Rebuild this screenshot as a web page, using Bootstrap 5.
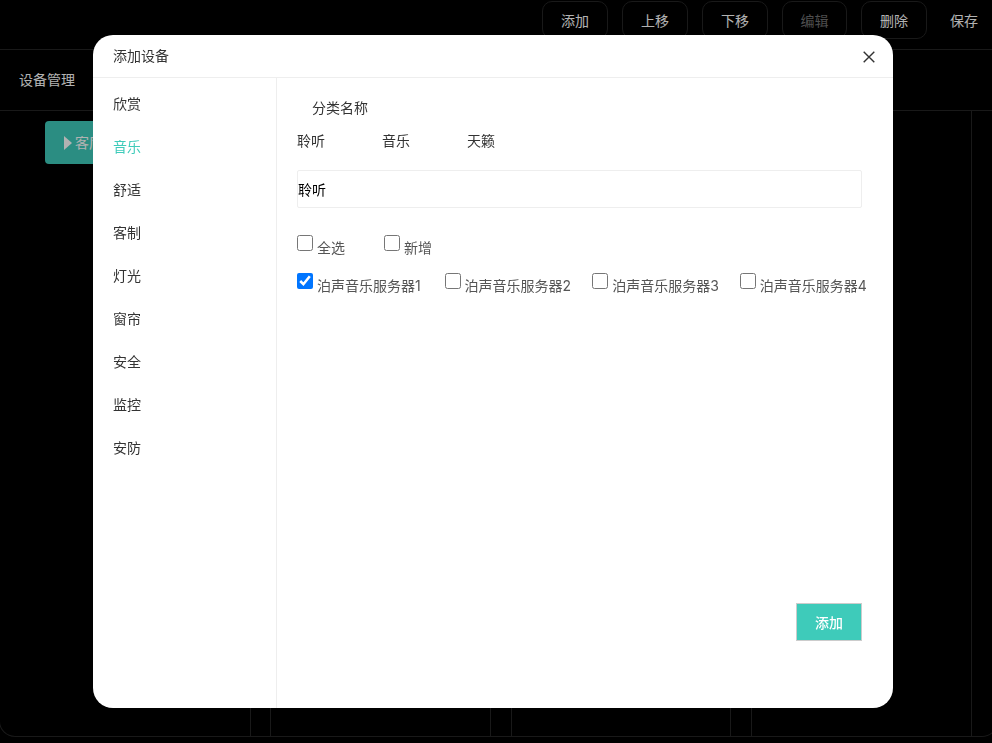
<!DOCTYPE html>
<html lang="zh-CN">
<head>
<meta charset="utf-8">
<title>添加设备</title>
<link href="https://cdn.jsdelivr.net/npm/bootstrap@5.3.0/dist/css/bootstrap.min.css" rel="stylesheet">
<style>
html,body{height:100%;overflow:hidden}
body{background:#000;font-family:"Inter","Noto Sans CJK SC",sans-serif;font-size:14px;color:#333}
.top-bar{height:50px;border-bottom:1px solid #242424;padding-left:542px;gap:14px}
.tool-btn{width:66px;height:38px;margin-top:1px;color:#fff;background:transparent;border:1px solid #242424;border-radius:10px;font-size:14px;padding:0}
.tool-btn.dim{color:#707070;width:65px}
.tool-save{color:#fff;background:transparent;border:0;padding:0;margin:1px 0 0 9px;font-size:14px;height:38px}
.frame{height:687px;margin:0 -6px 0 -1px;border-left:1px solid #242424;border-bottom:1px solid #242424;border-right:1px solid #242424;border-radius:0 0 16px 16px}
.sub-head{height:61px;border-bottom:1px solid #242424;padding-left:19px;color:#fff;line-height:60px}
.col-wrap{height:625px}
.pane{flex:none;width:251px;padding:10px 0 0 45px;border-right:1px solid #242424}
.pane-n{flex:none;width:221px;margin-left:19px;border-left:1px solid #242424;border-right:1px solid #242424}
.pane-n.third{width:220px;margin-left:20px}
.pane-n.fourth{width:221px;margin-left:20px}
.room-btn{width:130px;height:43px;background:#3ecbba;color:#fff;border:0;border-radius:4px;padding:0 0 0 19px;text-align:left;font-size:14px}
.tri{display:inline-block;border-left:8px solid #fff;border-top:7px solid transparent;border-bottom:7px solid transparent;margin-right:3px;vertical-align:-2px}
.modal-backdrop.show{opacity:.3}
.add-dialog{width:800px;max-width:800px;margin:35px 0 0 93px}
.add-content{height:673px;border:0;border-radius:20px;color:#333}
.add-head{height:43px;padding:0 18px 0 20px;border-bottom:1px solid #eee}
.add-title{font-size:14px;font-weight:400;color:#333}
.close-x{background:transparent;border:0;padding:0;width:12px;height:12px;display:flex;margin-top:1px}
.side-menu{width:184px;border-right:1px solid #eee;padding:4px 0 0 20px}
.side-item{height:43px;line-height:43px;color:#333}
.side-item.on{color:#3ecbba}
.add-main{padding:0 0 0 20px}
.cat-name{height:42px;padding:20px 0 0 15px;line-height:20px}
.cat-tabs{margin-top:11px;gap:57px;line-height:20px}
.name-input{width:565px;height:38px;margin-top:19px;padding:0;border:1px solid #eee;border-radius:2px;font-size:14px;color:#000}
.chk-row{margin-top:27px;gap:39px;color:#555}
.chk-row.second{margin-top:15px;gap:0}
.chk-item{display:flex;align-items:flex-start;gap:4px;height:23px;white-space:nowrap;line-height:20px}
.chk-row.second .chk-item{width:147.6px}
.chk-box{width:16px;height:16px;margin:0;flex:none}
.chk-item span{padding-top:3px}
.add-btn{width:66px;height:38px;background:#3ecbba;color:#fff;border:1px solid #ccc;border-radius:0;padding:0;font-size:14px;font-weight:500}
.add-foot{width:565px;margin-top:307px}
</style>
</head>
<body>
<div class="d-flex top-bar">
  <button class="tool-btn">添加</button>
  <button class="tool-btn">上移</button>
  <button class="tool-btn">下移</button>
  <button class="tool-btn dim">编辑</button>
  <button class="tool-btn">删除</button>
  <button class="tool-save">保存</button>
</div>
<div class="frame">
  <div class="sub-head">设备管理</div>
  <div class="d-flex col-wrap">
    <div class="pane"><button class="room-btn"><span class="tri"></span>客厅</button></div>
    <div class="pane-n"></div>
    <div class="pane-n third"></div>
    <div class="pane-n fourth"></div>
  </div>
</div>

<div class="modal-backdrop show"></div>
<div class="modal d-block" tabindex="-1">
  <div class="modal-dialog add-dialog">
    <div class="modal-content add-content">
      <div class="d-flex align-items-center justify-content-between add-head">
        <h5 class="add-title m-0">添加设备</h5>
        <button type="button" class="close-x" aria-label="Close">
          <svg width="12" height="12" viewBox="0 0 12 12" fill="none" stroke="#333" stroke-width="1.4"><path d="M.7.7l10.6 10.6M11.3.7L.7 11.3"/></svg>
        </button>
      </div>
      <div class="d-flex flex-grow-1">
        <div class="side-menu">
          <div class="side-item">欣赏</div>
          <div class="side-item on">音乐</div>
          <div class="side-item">舒适</div>
          <div class="side-item">客制</div>
          <div class="side-item">灯光</div>
          <div class="side-item">窗帘</div>
          <div class="side-item">安全</div>
          <div class="side-item">监控</div>
          <div class="side-item">安防</div>
        </div>
        <div class="add-main flex-grow-1">
          <div class="cat-name">分类名称</div>
          <div class="d-flex cat-tabs"><span>聆听</span><span>音乐</span><span>天籁</span></div>
          <input class="form-control name-input" type="text" value="聆听">
          <div class="d-flex chk-row">
            <label class="chk-item"><input class="chk-box" type="checkbox"><span>全选</span></label>
            <label class="chk-item"><input class="chk-box" type="checkbox"><span>新增</span></label>
          </div>
          <div class="d-flex chk-row second">
            <label class="chk-item"><input class="chk-box" type="checkbox" checked><span>泊声音乐服务器1</span></label>
            <label class="chk-item"><input class="chk-box" type="checkbox"><span>泊声音乐服务器2</span></label>
            <label class="chk-item"><input class="chk-box" type="checkbox"><span>泊声音乐服务器3</span></label>
            <label class="chk-item"><input class="chk-box" type="checkbox"><span>泊声音乐服务器4</span></label>
          </div>
          <div class="d-flex justify-content-end add-foot"><button class="add-btn">添加</button></div>
        </div>
      </div>
    </div>
  </div>
</div>
<script src="https://cdn.jsdelivr.net/npm/bootstrap@5.3.0/dist/js/bootstrap.bundle.min.js"></script>
</body>
</html>
